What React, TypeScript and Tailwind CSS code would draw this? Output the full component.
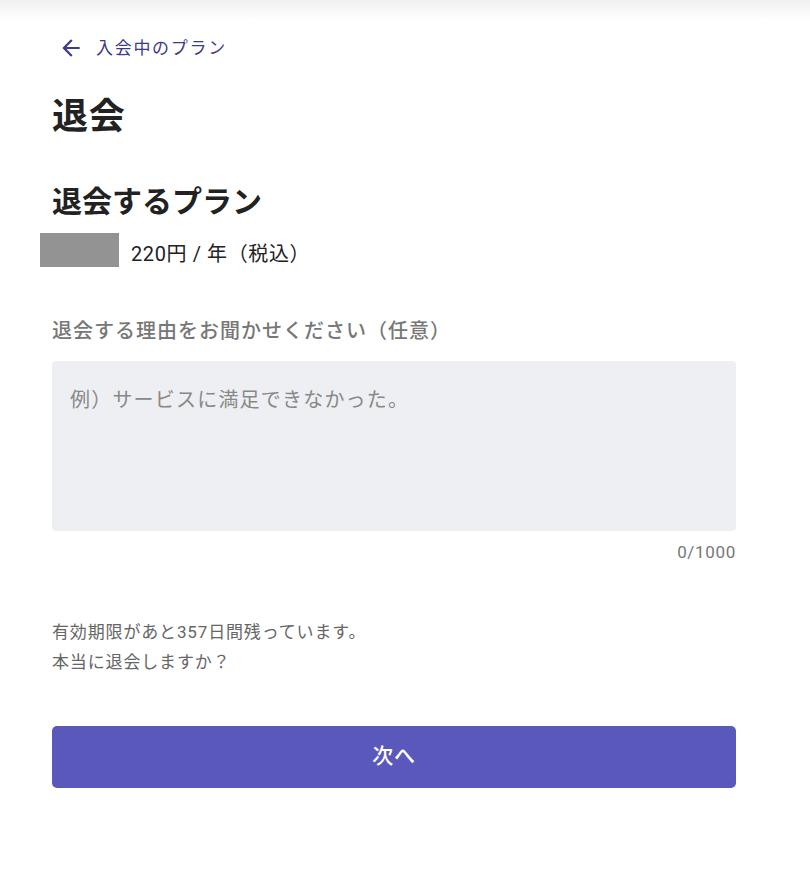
function BackArrow() {
  return (
    <svg viewBox="0 0 24 24" className="w-[26px] h-[26px]" fill="currentColor">
      <path d="M20 11H7.83l5.59-5.59L12 4l-8 8 8 8 1.41-1.41L7.83 13H20v-2z" />
    </svg>
  );
}

export default function App() {
  return (
    <div
      className="min-h-screen bg-white text-[#222]"
      style={{ fontFamily: 'Roboto, "Noto Sans CJK JP", sans-serif' }}
    >
      {/* header shadow */}
      <div className="h-5 bg-gradient-to-b from-[#f0f0f0] to-white" />

      <div className="ml-[52px] w-[684px]">
        {/* back link */}
        <a className="flex items-center gap-[12px] pt-[16px] ml-[6px] h-[40px] text-[#3b3a8c] text-[17px] leading-[24px] tracking-[0.1em]">
          <BackArrow />
          <span>入会中のプラン</span>
        </a>

        <h1 className="mt-[35px] text-[36px] leading-[44px] font-bold tracking-[0.02em]">退会</h1>

        <h2 className="mt-[44px] text-[30px] leading-[38px] font-bold">退会するプラン</h2>

        <div className="mt-[12px] -ml-3 flex items-start gap-3">
          <div className="w-[79px] h-[34px] bg-[#939393]" />
          <span className="mt-[7px] text-[20px] leading-[28px] tracking-[0.03em] text-[#222]">220円 / 年（税込）</span>
        </div>

        <label className="block mt-[49px] text-[20px] leading-[28px] font-medium text-[#777] tracking-[0.05em]">
          退会する理由をお聞かせください（任意）
        </label>

        <textarea
          className="mt-[16px] block w-full h-[170px] resize-none rounded bg-[#eeeff3] px-[18px] pt-[25px] pb-4 text-[20px] leading-[28px] tracking-[0.06em] text-[#333] placeholder:text-[#888] outline-none"
          placeholder="例）サービスに満足できなかった。"
        />

        <div className="mt-[10px] text-right text-[17px] leading-[22px] tracking-[0.04em] text-[#777]">0/1000</div>

        <div className="mt-[54px] text-[17px] leading-[30px] tracking-[0.05em] text-[#666]">
          <p>有効期限があと357日間残っています。</p>
          <p>本当に退会しますか？</p>
        </div>

        <button className="mt-[49px] w-full h-[62px] rounded-[5px] bg-[#5a58bb] text-white text-[21px] font-medium tracking-[0.04em]">
          次へ
        </button>
      </div>
    </div>
  );
}
